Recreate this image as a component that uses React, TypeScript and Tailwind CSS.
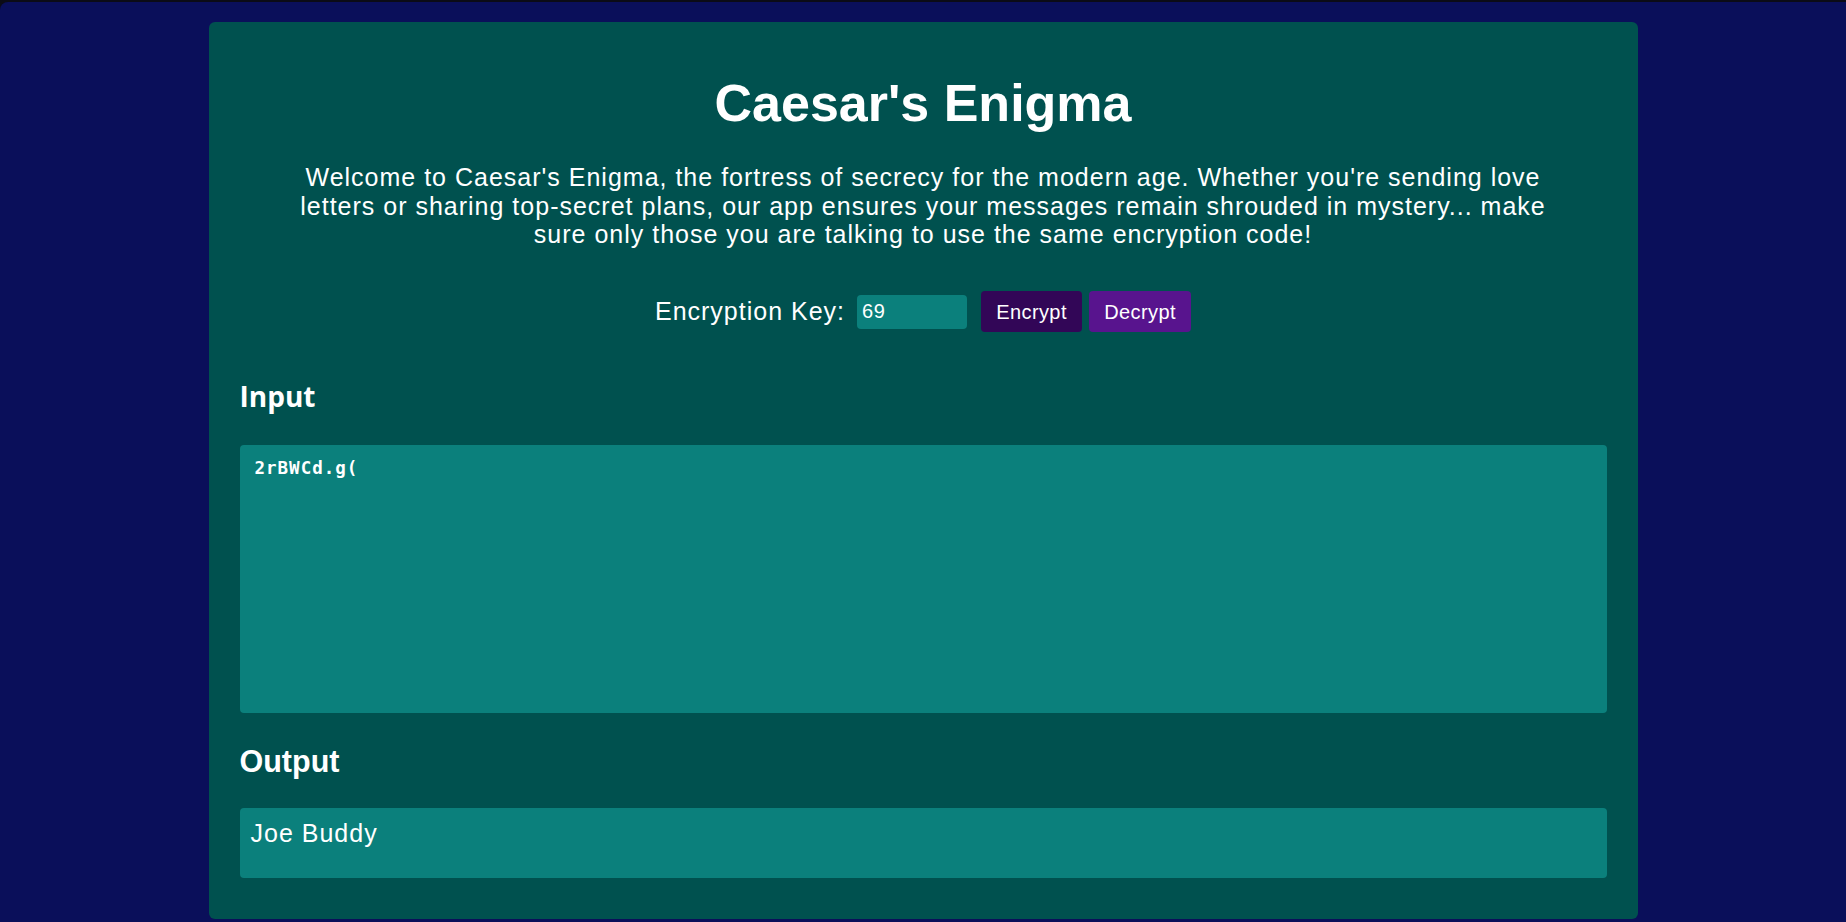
import React, { useState } from "react";

// simple caesar shift over printable ascii (32..126)
const shift = (text: string, key: number) => {
  const range = 95;
  const k = ((key % range) + range) % range;
  return text
    .split("")
    .map((ch) => {
      const c = ch.charCodeAt(0);
      if (c < 32 || c > 126) return ch;
      return String.fromCharCode(((c - 32 + k) % range) + 32);
    })
    .join("");
};

export default function App() {
  const [key, setKey] = useState("69");
  const [input, setInput] = useState("2rBWCd.g(");
  const [output, setOutput] = useState("Joe Buddy");

  const handleEncrypt = () => setOutput(shift(input, Number(key) || 0));
  const handleDecrypt = () => setOutput(shift(input, -(Number(key) || 0)));

  return (
    <div className="min-h-screen bg-[#0b0b16] pt-[2px] font-['Liberation_Sans',Arial,sans-serif] tracking-[1px] text-white">
      <div className="min-h-[920px] rounded-tl-lg bg-[#0a0f5a] pt-[20px] pb-[3px]">
        <div className="mx-auto w-[1429px] rounded-md bg-[#00514f] px-[31px] pt-[52px] pb-[41px]">
          <h1 className="text-center text-[52px] leading-[59px] font-bold tracking-normal">
            Caesar's Enigma
          </h1>

          <p className="mx-auto mt-[30px] max-w-[1280px] text-center text-[25px] leading-[28.7px]">
            Welcome to Caesar's Enigma, the fortress of secrecy for the modern
            age. Whether you're sending love letters or sharing top-secret
            plans, our app ensures your messages remain shrouded in mystery...
            make sure only those you are talking to use the same encryption
            code!
          </p>

          <div className="mt-[42px] flex items-center justify-center">
            <label
              htmlFor="key"
              className="mr-[12px] text-[25px] leading-[28.7px]"
            >
              Encryption Key:
            </label>
            <input
              id="key"
              value={key}
              onChange={(e) => setKey(e.target.value)}
              className="h-[34px] w-[110px] rounded bg-[#0b807c] px-[5px] text-[20px] tracking-[0.5px] text-white outline-none"
            />
            <button
              onClick={handleEncrypt}
              className="ml-[14px] h-[41px] w-[101px] rounded bg-[#320657] text-[20px] tracking-[0.4px] text-white"
            >
              Encrypt
            </button>
            <button
              onClick={handleDecrypt}
              className="ml-[7px] h-[41px] w-[102px] rounded bg-[#58148e] text-[20px] tracking-[0.4px] text-white"
            >
              Decrypt
            </button>
          </div>

          <label
            htmlFor="input"
            className="mt-[47px] block font-['Open_Sans',sans-serif] text-[28px] leading-[34.5px] font-bold tracking-normal"
          >
            Input
          </label>
          <textarea
            id="input"
            value={input}
            onChange={(e) => setInput(e.target.value)}
            className="mt-[31px] block h-[268px] w-full resize-none rounded bg-[#0b807c] px-[15px] py-[10px] font-['DejaVu_Sans_Mono',monospace] text-[17.5px] font-semibold tracking-[1px] text-white outline-none"
          />

          <h2 className="mt-[31px] text-[30.5px] leading-[34.5px] font-bold tracking-normal">
            Output
          </h2>
          <div className="mt-[30px] min-h-[70px] rounded bg-[#0b807c] px-[11px] py-[11px] text-[25px] leading-[28.7px]">
            {output}
          </div>
        </div>
      </div>
    </div>
  );
}
